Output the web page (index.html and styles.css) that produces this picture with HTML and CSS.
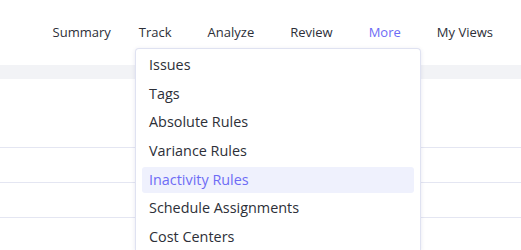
FILE: index.html
```html
<!DOCTYPE html>
<html lang="en">
<head>
    <meta charset="UTF-8">
    <meta name="viewport" content="width=device-width, initial-scale=1.0">
    <title>Inactivity Rules</title>
    <link rel="stylesheet" href="styles.css">
</head>
<body>
    <!-- Navigation -->
    <header class="topbar">
        <nav class="nav">
            <a class="nav-item summary">Summary</a>
            <a class="nav-item">Track</a>
            <a class="nav-item">Analyze</a>
            <a class="nav-item">Review</a>
            <a class="nav-item active">More</a>
            <a class="nav-item">My Views</a>
        </nav>
    </header>

    <div class="band"></div>

    <div class="content">
        <div class="spacer"></div>
        <div class="row"></div>
        <div class="row"></div>
    </div>

    <!-- Menu "More" -->
    <div class="dropdown">
        <a class="dropdown-item">Issues</a>
        <a class="dropdown-item">Tags</a>
        <a class="dropdown-item">Absolute Rules</a>
        <a class="dropdown-item">Variance Rules</a>
        <a class="dropdown-item selected">Inactivity Rules</a>
        <a class="dropdown-item">Schedule Assignments</a>
        <a class="dropdown-item">Cost Centers</a>
    </div>
</body>
</html>
```
FILE: styles.css
```css
/* Styles généraux */
body {
    margin: 0;
    font-family: "Open Sans", Lato, sans-serif;
    background-color: #ffffff;
    color: #2d2f38;
    height: 250px;
    overflow: hidden;
    position: relative;
}

/* Barre de navigation */
.topbar {
    height: 65px;
    display: flex;
    justify-content: flex-end;
    align-items: center;
    padding-right: 28px;
}
.nav {
    display: flex;
    gap: 36px;
    margin-top: -2px;
}
.nav-item {
    font-size: 13px;
    font-weight: 500;
    color: #2d2f38;
    cursor: pointer;
}
.nav-item.summary {
    margin-right: -8px;
}
.nav-item.active {
    color: #6d6cf5;
}

/* Bande grise sous l'en-tête */
.band {
    height: 14px;
    background-color: #f2f3f6;
}

/* Lignes du tableau */
.spacer {
    height: 68px;
    border-bottom: 1px solid #e4e6f2;
}
.row {
    height: 34px;
    border-bottom: 1px solid #e4e6f2;
}

/* Menu déroulant */
.dropdown {
    position: absolute;
    top: 48px;
    left: 135px;
    width: 272px;
    height: 198px;
    overflow: hidden;
    padding: 3px 6px 0 6px;
    background-color: #ffffff;
    border: 1px solid #dfe2f1;
    border-bottom: none;
    border-radius: 4px 4px 0 0;
    box-shadow: 0 1px 4px rgba(60, 60, 120, 0.12);
    display: flex;
    flex-direction: column;
    gap: 2.67px;
}
.dropdown-item {
    flex-shrink: 0;
    height: 26px;
    line-height: 26px;
    padding-left: 7px;
    font-size: 14.4px;
    font-weight: 500;
    color: #2d2f38;
    border-radius: 3px;
    cursor: pointer;
}
.dropdown-item.selected {
    background-color: #eff1fd;
    color: #6d6cf5;
}
```
